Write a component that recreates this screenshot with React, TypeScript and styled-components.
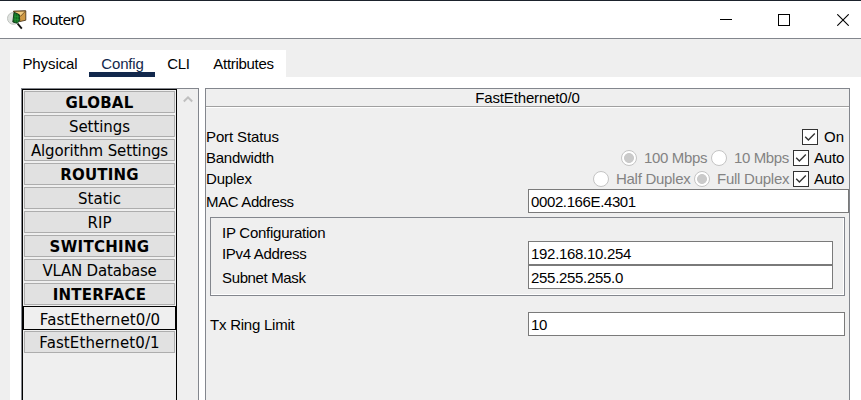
import React from 'react';
import styled, { createGlobalStyle } from 'styled-components';

const GlobalStyle = createGlobalStyle`
  * { box-sizing: border-box; }
  html, body { margin: 0; padding: 0; overflow: hidden; }
  body { background: #efefef; color: #000; font: 15px/21px "Liberation Sans", Arial, sans-serif; }
  button, input { font: inherit; color: inherit; margin: 0; border-radius: 0; outline: none; }
`;

const Window = styled.div`
  width: 861px;
  height: 400px;
  overflow: hidden;
  display: flex;
  flex-direction: column;
  background: #efefef;
`;

const TitleBar = styled.header`
  flex: none;
  height: 39px;
  display: flex;
  align-items: center;
  padding-left: 7px;
  background: #fff;
  border-top: 1px solid #1b222c;
  border-bottom: 1px solid #83868d;
`;

const Title = styled.h1`
  margin: -2px auto 0 5px;
  font: 400 15.3px/20px "Noto Sans", "Open Sans", sans-serif;
  letter-spacing: -0.8px;
`;

const WindowButton = styled.button<{ $width: number }>`
  width: ${(p) => p.$width}px;
  height: 37px;
  padding: 0;
  border: 0;
  background: none;
  display: flex;
  justify-content: center;
  align-items: center;
`;

const Tabs = styled.nav`
  flex: none;
  align-self: flex-start;
  width: 276px;
  height: 27px;
  margin: 11px 0 0 10px;
  display: flex;
  background: #fff;
`;

const Tab = styled.button<{ $width: number; $active?: boolean; $spacing?: number }>`
  width: ${(p) => p.$width}px;
  height: 27px;
  padding: 5px 0 0 1px;
  border: 0;
  border-bottom: 5px solid ${(p) => (p.$active ? '#12284c' : 'transparent')};
  background: none;
  color: ${(p) => (p.$active ? '#12284c' : '#000')};
  line-height: 18px;
  letter-spacing: ${(p) => p.$spacing ?? 0}px;
  white-space: nowrap;
`;

const Content = styled.main`
  flex: 1;
  min-height: 0;
  margin-left: 10px;
  padding: 11px 11px 0 11px;
  display: flex;
  gap: 6px;
  background: #fff;
`;

const Sidebar = styled.aside`
  width: 178px;
  display: flex;
  border: 1px solid #83868d;
  border-bottom: 0;
  background: #efefef;
`;

const MenuList = styled.div`
  width: 155px;
  padding: 1px;
  display: flex;
  flex-direction: column;
  gap: 2px;
  border: 1px solid #000;
  border-bottom: 0;
`;

const MenuButton = styled.button<{ $heading?: boolean; $selected?: boolean; $spacing?: number }>`
  flex: none;
  height: ${(p) => (p.$selected ? 24 : 22)}px;
  margin: ${(p) => (p.$selected ? '-1px -1px -1px' : '0')};
  padding: ${(p) => (p.$selected ? '3px 0 0 1px' : '1px 0 0')};
  border: 1px solid ${(p) => (p.$selected ? '#000' : '#adadad')};
  background: ${(p) => (p.$selected ? '#efefef' : '#e1e1e1')};
  font: ${(p) => (p.$heading ? 700 : 400)} 15px/20px Verdana, "DejaVu Sans", sans-serif;
  letter-spacing: ${(p) => p.$spacing ?? 0}px;
  white-space: nowrap;
`;

const ScrollTrack = styled.div`
  width: 21px;
  padding-top: 6px;
  display: flex;
  justify-content: center;
`;

const Panel = styled.section`
  width: 645px;
  border: 1px solid #83868d;
  border-bottom: 0;
  background: #efefef;
`;

const PanelTitle = styled.h2`
  height: 19px;
  margin: 0 0 18px;
  font-size: 15px;
  font-weight: 400;
  line-height: 18px;
  letter-spacing: -0.15px;
  text-align: center;
  border-bottom: 1px solid #fff;
  box-shadow: inset 0 -1px #a0a0a0;
`;

const Row = styled.div<{ $height?: number }>`
  height: ${(p) => p.$height ?? 21}px;
  display: flex;
  align-items: center;
  justify-content: space-between;
`;

const Label = styled.span<{ $spacing?: number; $drop?: number }>`
  letter-spacing: ${(p) => p.$spacing ?? 0}px;
  white-space: nowrap;
  padding-top: ${(p) => p.$drop ?? 0}px;
`;

const Options = styled.div`
  display: flex;
  align-items: center;
  padding-right: 5px;
`;

const Option = styled.label<{ $width: number; $disabled?: boolean; $gap?: number }>`
  width: ${(p) => p.$width}px;
  height: 21px;
  display: flex;
  align-items: center;
  gap: ${(p) => p.$gap ?? 7}px;
  color: ${(p) => (p.$disabled ? '#838383' : '#000')};
`;

const RadioMark = styled.span<{ $checked?: boolean }>`
  flex: none;
  width: 16px;
  height: 16px;
  border: 1px solid #c4c4c4;
  border-radius: 50%;
  background: ${(p) => (p.$checked ? 'radial-gradient(circle, #cacaca 0 4.6px, #fff 5.3px)' : '#fff')};
`;

const CheckMark = styled.span`
  flex: none;
  width: 16px;
  height: 16px;
  border: 1px solid #333;
  background: #fff;
  svg { display: block; }
`;

const Field = styled.input<{ $width: number; $spacing?: number }>`
  width: ${(p) => p.$width}px;
  height: 24px;
  padding: 1px 2px 0;
  border: 1px solid #7a7a7a;
  background: #fff;
  letter-spacing: ${(p) => p.$spacing ?? 0}px;
`;

const Group = styled.fieldset`
  width: 635px;
  height: 79px;
  margin: 4px 0 16px 4px;
  padding: 5px 11px 0;
  border: 1px solid #83868d;
  box-shadow: inset -1px -1px #fff;
`;

const RingRow = styled(Row)`
  padding: 0 4px;
`;

function RouterIcon() {
  return (
    <svg width="20" height="20" viewBox="0 0 20 20">
      <path d="M6.5 1.2l12.3-.4v9.4l-6 1.4-5-3z" fill="#d09a45" stroke="#3b2a12" strokeWidth=".8" />
      <path d="M6.8 1.4l11.8-.4-5 5.2z" fill="#f2cb80" stroke="#5f4118" strokeWidth=".8" />
      <circle cx="6.4" cy="8.4" r="5.9" fill="#dfe2df" stroke="#bfc3bf" />
      <path d="M7 2.4l5.2 2.2.6 6-2.6 2.6-4.4-1.2z" fill="#116d20" stroke="#0a3012" strokeWidth=".9" />
      <path d="M8.2 3.4v9M10.4 4.4v8.4M6.6 6l6 1M6.3 9l6.2.8" stroke="#2ba140" strokeWidth=".5" />
      <path d="M10.6 13.6l4.2 5" stroke="#111" strokeWidth="1.8" />
    </svg>
  );
}

function Checkbox() {
  return (
    <CheckMark>
      <svg width="14" height="14" viewBox="0 0 14 14">
        <path d="M2.2 6.8l3.2 3.2 6.4-6.4" fill="none" stroke="#333" strokeWidth="1.4" />
      </svg>
    </CheckMark>
  );
}

type MenuEntry = { label: string; heading?: boolean; selected?: boolean; spacing?: number };

const menu: MenuEntry[] = [
  { label: 'GLOBAL', heading: true, spacing: 0.2 },
  { label: 'Settings', spacing: -0.05 },
  { label: 'Algorithm Settings', spacing: -0.15 },
  { label: 'ROUTING', heading: true, spacing: 0.2 },
  { label: 'Static' },
  { label: 'RIP' },
  { label: 'SWITCHING', heading: true, spacing: 0.3 },
  { label: 'VLAN Database', spacing: -0.2 },
  { label: 'INTERFACE', heading: true, spacing: 0.2 },
  { label: 'FastEthernet0/0', selected: true, spacing: 0.1 },
  { label: 'FastEthernet0/1', spacing: 0.1 },
];

export default function App() {
  return (
    <Window>
      <GlobalStyle />
      <TitleBar>
        <RouterIcon />
        <Title>Router0</Title>
        <WindowButton $width={34} aria-label="Minimize">
          <svg width="12" height="12"><path d="M0 5.5h12" stroke="#000" /></svg>
        </WindowButton>
        <WindowButton $width={82} aria-label="Maximize">
          <svg width="12" height="12"><rect x=".5" y=".5" width="11" height="11" fill="none" stroke="#000" /></svg>
        </WindowButton>
        <WindowButton $width={36} aria-label="Close">
          <svg width="12" height="12"><path d="M.3.3l11.4 11.4M11.7.3L.3 11.7" stroke="#000" strokeWidth="1.1" /></svg>
        </WindowButton>
      </TitleBar>
      <Tabs>
        <Tab $width={79} $spacing={-0.1}>Physical</Tab>
        <Tab $width={66} $active $spacing={-0.15}>Config</Tab>
        <Tab $width={46} $spacing={-0.3}>CLI</Tab>
        <Tab $width={84} $spacing={-0.3}>Attributes</Tab>
      </Tabs>
      <Content>
        <Sidebar>
          <MenuList>
            {menu.map((m) => (
              <MenuButton key={m.label} $heading={m.heading} $selected={m.selected} $spacing={m.spacing}>
                {m.label}
              </MenuButton>
            ))}
          </MenuList>
          <ScrollTrack>
            <svg width="10" height="8"><path d="M.8 6.5L5 2.3l4.2 4.2" fill="none" stroke="#bfbfbf" strokeWidth="2" /></svg>
          </ScrollTrack>
        </Sidebar>
        <Panel>
          <PanelTitle>FastEthernet0/0</PanelTitle>
          <Row>
            <Label $spacing={-0.12}>Port Status</Label>
            <Options>
              <Option $width={42} $gap={6}><Checkbox /><Label>On</Label></Option>
            </Options>
          </Row>
          <Row>
            <Label $spacing={-0.25}>Bandwidth</Label>
            <Options>
              <Option $width={90} $disabled><RadioMark $checked /><Label $spacing={-0.35}>100 Mbps</Label></Option>
              <Option $width={82} $disabled><RadioMark /><Label $spacing={-0.4}>10 Mbps</Label></Option>
              <Option $width={51} $gap={5}><Checkbox /><Label $spacing={-0.2}>Auto</Label></Option>
            </Options>
          </Row>
          <Row>
            <Label $spacing={-0.15}>Duplex</Label>
            <Options>
              <Option $width={101} $disabled><RadioMark /><Label $spacing={-0.28}>Half Duplex</Label></Option>
              <Option $width={99} $disabled><RadioMark $checked /><Label $spacing={-0.25}>Full Duplex</Label></Option>
              <Option $width={51} $gap={5}><Checkbox /><Label $spacing={-0.2}>Auto</Label></Option>
            </Options>
          </Row>
          <Row $height={24}>
            <Label $spacing={-0.36} $drop={1}>MAC Address</Label>
            <Field $width={321} $spacing={-0.38} defaultValue="0002.166E.4301" />
          </Row>
          <Group>
            <Row $height={18}><Label $spacing={-0.25} $drop={1}>IP Configuration</Label></Row>
            <Row $height={24}>
              <Label $spacing={-0.33} $drop={1}>IPv4 Address</Label>
              <Field $width={305} $spacing={-0.3} defaultValue="192.168.10.254" />
            </Row>
            <Row $height={24}>
              <Label $spacing={-0.36} $drop={1}>Subnet Mask</Label>
              <Field $width={305} $spacing={-0.3} defaultValue="255.255.255.0" />
            </Row>
          </Group>
          <RingRow $height={24}>
            <Label $spacing={-0.23} $drop={1}>Tx Ring Limit</Label>
            <Field $width={317} $spacing={-0.3} defaultValue="10" />
          </RingRow>
        </Panel>
      </Content>
    </Window>
  );
}
